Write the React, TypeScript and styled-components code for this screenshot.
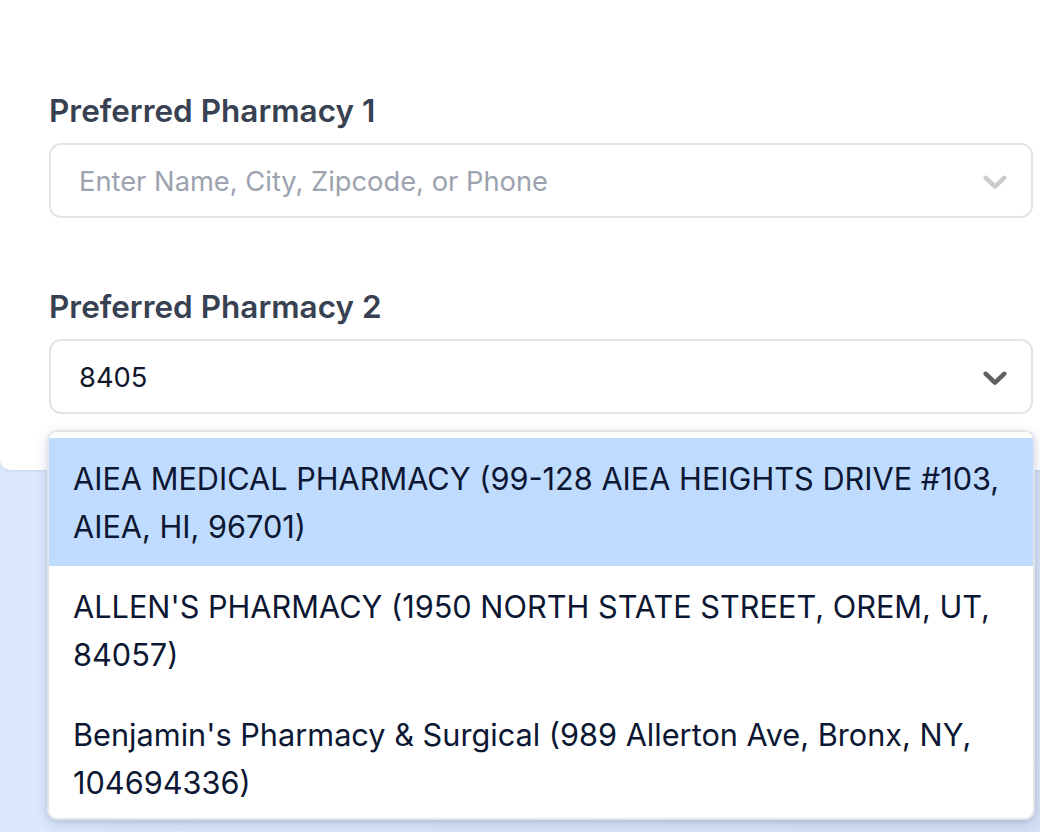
import styled, { createGlobalStyle } from 'styled-components'

interface PharmacyOption {
	key: number
	label: string
}

const GlobalStyle = createGlobalStyle`
	html, body {
		margin: 0;
		padding: 0;
	}
	body {
		font-family: Inter, "Noto Sans", "Liberation Sans", sans-serif;
		background: linear-gradient(90deg, #dce8fc 0%, #d5e1f4 100%);
		-webkit-font-smoothing: antialiased;
	}
`

const Page = styled.div`
	min-height: 832px;
	overflow: hidden;
`

const Card = styled.div`
	background: #ffffff;
	border-radius: 0 0 0 10px;
	box-shadow: 0 1px 3px rgba(15, 23, 42, 0.08);
	padding: 91px 7px 56px 49px;
`

const Field = styled.div`
	position: relative;
	display: flex;
	flex-direction: column;
	gap: 12px;

	& + & {
		margin-top: 69px;
	}
`

const Label = styled.label`
	font-size: 31.5px;
	font-weight: 600;
	line-height: 40px;
	color: #374151;
`

const Control = styled.div`
	box-sizing: border-box;
	height: 75px;
	display: flex;
	align-items: center;
	padding: 0 14px 0 28px;
	background: #ffffff;
	border: 2px solid #e1e4e9;
	border-radius: 12px;
`

const ValueText = styled.span<{ placeholder?: boolean }>`
	flex: 1;
	padding-top: 3px;
	font-size: 27.3px;
	line-height: 40px;
	color: ${props => (props.placeholder ? '#9ca3af' : '#0f172a')};
`

const Indicator = styled.span<{ focused?: boolean }>`
	display: flex;
	padding: 0 2px;
	color: ${props => (props.focused ? 'hsl(0, 0%, 38%)' : 'hsl(0, 0%, 80%)')};
`

const Menu = styled.div`
	position: absolute;
	top: calc(100% + 16px);
	left: -2px;
	right: -2px;
	z-index: 10;
	box-sizing: border-box;
	max-height: 390px;
	overflow-y: auto;
	padding: 6px 0;
	background: #ffffff;
	border: 2px solid #e2e5ea;
	border-radius: 10px;
	box-shadow: 0 4px 14px rgba(30, 50, 90, 0.14), 0 2px 4px rgba(30, 50, 90, 0.1);

	&::-webkit-scrollbar {
		display: none;
	}
`

const Option = styled.div<{ active?: boolean }>`
	padding: 17px 24px 15px;
	font-size: 30.7px;
	line-height: 48px;
	color: #0c1733;
	background: ${props => (props.active ? '#bfdbfe' : '#ffffff')};
`

const Chevron = () => (
	<svg width="40" height="40" viewBox="0 0 20 20" fill="currentColor" aria-hidden="true">
		<path d="M4.516 7.548c0.436-0.446 1.043-0.481 1.576 0l3.908 3.747 3.908-3.747c0.533-0.481 1.141-0.446 1.574 0 0.436 0.445 0.408 1.197 0 1.615-0.406 0.418-4.695 4.502-4.695 4.502-0.217 0.223-0.502 0.335-0.787 0.335s-0.57-0.112-0.789-0.335c0 0-4.287-4.084-4.695-4.502s-0.436-1.17 0-1.615z" />
	</svg>
)

const options: PharmacyOption[] = [
	{ key: 0, label: 'AIEA MEDICAL PHARMACY (99-128 AIEA HEIGHTS DRIVE #103, AIEA, HI, 96701)' },
	{ key: 1, label: "ALLEN'S PHARMACY (1950 NORTH STATE STREET, OREM, UT, 84057)" },
	{ key: 2, label: "Benjamin's Pharmacy & Surgical (989 Allerton Ave, Bronx, NY, 104694336)" },
]

export default function App() {
	return (
		<Page>
			<GlobalStyle />
			<Card>
				<Field>
					<Label>Preferred Pharmacy 1</Label>
					<Control>
						<ValueText placeholder>Enter Name, City, Zipcode, or Phone</ValueText>
						<Indicator>
							<Chevron />
						</Indicator>
					</Control>
				</Field>
				<Field>
					<Label>Preferred Pharmacy 2</Label>
					<Control>
						<ValueText>8405</ValueText>
						<Indicator focused>
							<Chevron />
						</Indicator>
					</Control>
					<Menu>
						{options.map(item => (
							<Option key={item.key} active={item.key === 0}>
								{item.label}
							</Option>
						))}
					</Menu>
				</Field>
			</Card>
		</Page>
	)
}
